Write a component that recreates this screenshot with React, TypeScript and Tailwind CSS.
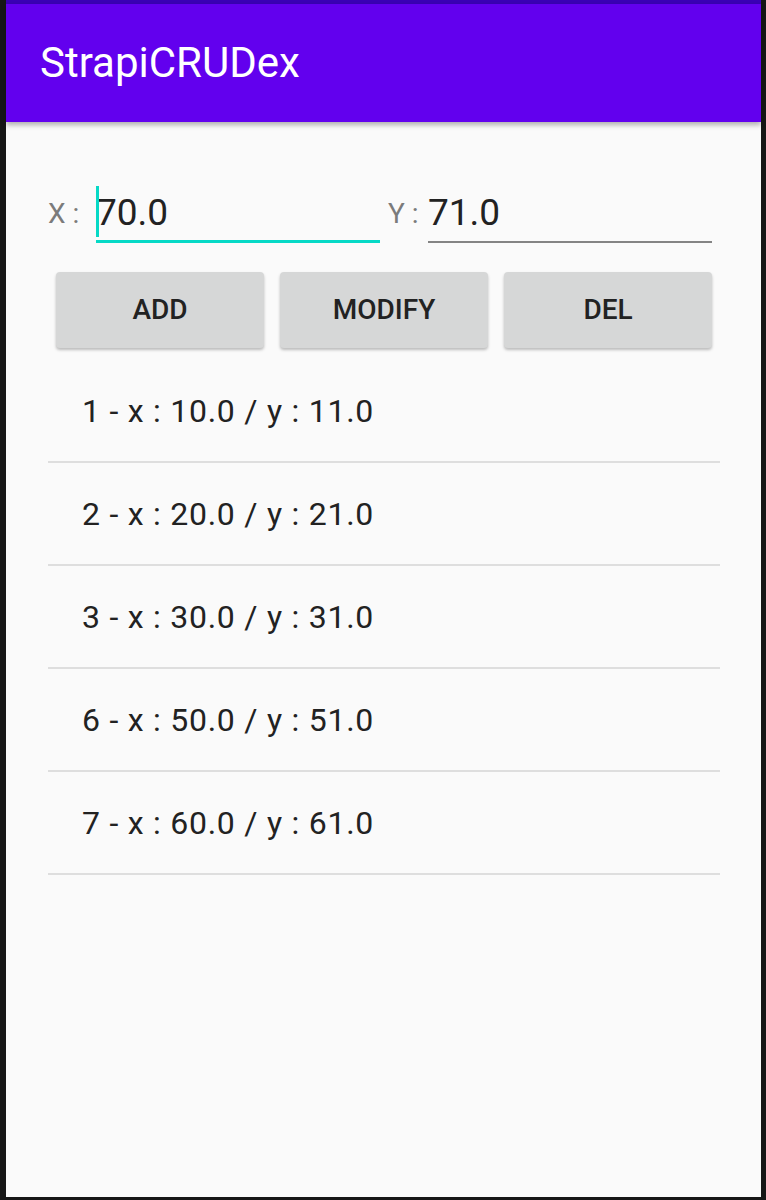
import React from 'react';

const rows = [
  '1 - x : 10.0 / y : 11.0',
  '2 - x : 20.0 / y : 21.0',
  '3 - x : 30.0 / y : 31.0',
  '6 - x : 50.0 / y : 51.0',
  '7 - x : 60.0 / y : 61.0',
];

const App: React.FC = () => {
  return (
    <div className="w-[766px] h-[1200px] bg-[#161616] overflow-hidden" style={{ fontFamily: 'Roboto, "Noto Sans", sans-serif' }}>
      <div className="ml-[6px] w-[755px] h-[1197px] bg-[#fafafa] flex flex-col">
        {/* status strip + app bar */}
        <div className="h-[4px] bg-[#3a00b5]" />
        <div className="relative z-10 h-[118px] bg-[#6200ee] flex items-center pl-[34px] shadow-[0_3px_5px_rgba(0,0,0,0.3)]">
          <span className="text-white text-[42px] leading-none">StrapiCRUDex</span>
        </div>

        <div className="pl-[42px] pr-[41px]">
          {/* inputs */}
          <div className="mt-[62px] flex items-end h-[59px]">
            <div className="w-[48px] text-[28px] text-[#7b7b7b] leading-none pb-[15px]">X :</div>
            <div className="relative w-[284px] h-full border-b-[3px] border-[#06d9c6] flex items-end">
              <div className="absolute left-0 top-[2px] w-[3px] h-[51px] bg-[#06d9c6]" />
              <span className="text-[37px] text-[#222] leading-none pb-[9px]">70.0</span>
            </div>
            <div className="ml-[8px] w-[40px] text-[28px] text-[#7b7b7b] leading-none pb-[15px]">Y :</div>
            <div className="w-[284px] h-full border-b-2 border-[#848484] flex items-end">
              <span className="text-[37px] text-[#222] leading-none pb-[10px]">71.0</span>
            </div>
          </div>

          {/* buttons */}
          <div className="mt-[29px] ml-[8px] flex gap-[16px]">
            {['ADD', 'MODIFY', 'DEL'].map((b) => (
              <button
                key={b}
                className="w-[208px] h-[76px] rounded-[4px] bg-[#d6d7d7] text-[28px] font-medium text-[#222] shadow-[0_2px_3px_rgba(0,0,0,0.25)]"
              >
                {b}
              </button>
            ))}
          </div>

          {/* list */}
          <div className="mt-[12px]">
            {rows.map((r) => (
              <div key={r} className="h-[103px] flex items-center pl-[34px] border-b-2 border-[#dedede] text-[32px] tracking-[0.75px] text-[#222]">
                {r}
              </div>
            ))}
          </div>
        </div>
      </div>
    </div>
  );
};

export default App;
